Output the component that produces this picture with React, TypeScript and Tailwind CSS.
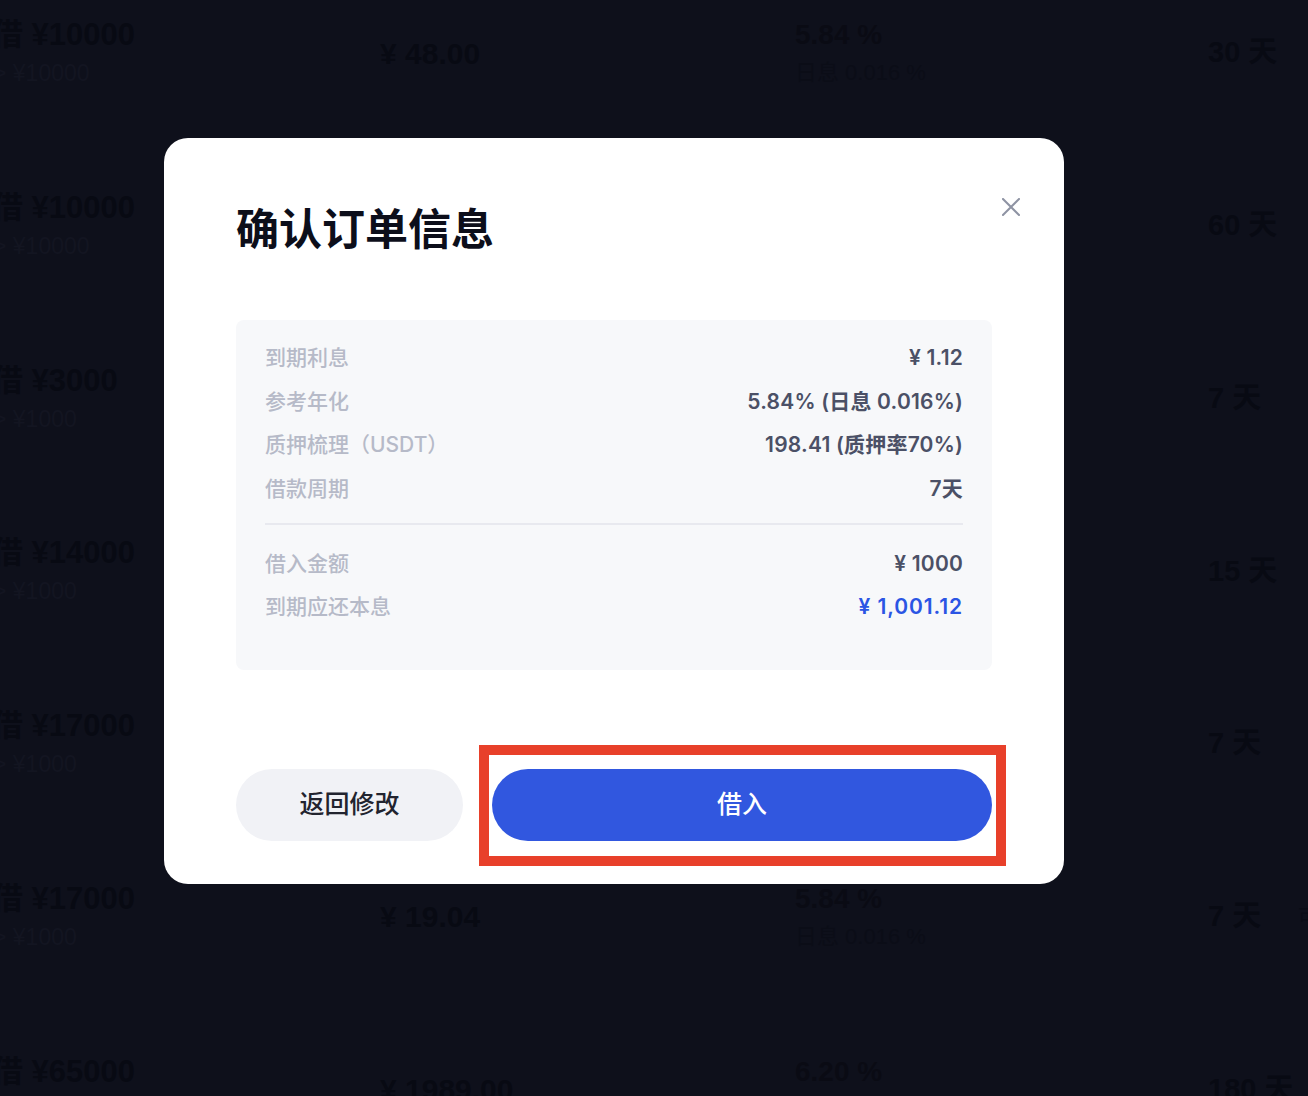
import type { ReactNode } from 'react';

type Row = {
  amount: string;
  min: string;
  fee?: string;
  rate?: string;
  daily?: string;
  days: string;
  extra?: string;
};

// rows 2-5 sit under the dialog in the middle columns
const rows: Row[] = [
  { amount: '借 ¥10000', min: '> ¥10000', fee: '¥ 48.00', rate: '5.84 %', daily: '日息 0.016 %', days: '30 天' },
  { amount: '借 ¥10000', min: '> ¥10000', days: '60 天' },
  { amount: '借 ¥3000', min: '> ¥1000', days: '7 天' },
  { amount: '借 ¥14000', min: '> ¥1000', days: '15 天' },
  { amount: '借 ¥17000', min: '> ¥1000', days: '7 天' },
  { amount: '借 ¥17000', min: '> ¥1000', fee: '¥ 19.04', rate: '5.84 %', daily: '日息 0.016 %', days: '7 天', extra: '可' },
  { amount: '借 ¥65000', min: '> ¥1000', fee: '¥ 1989.00', rate: '6.20 %', daily: '日息 0.017 %', days: '180 天' }
];

const details = [
  { label: '到期利息', value: '¥ 1.12' },
  { label: '参考年化', value: '5.84% (日息 0.016%)' },
  { label: '质押梳理（USDT）', value: '198.41 (质押率70%)' },
  { label: '借款周期', value: '7天' }
];

function DetailRow({ label, children }: { label: string; children: ReactNode }) {
  return (
    <div className="flex h-[30px] items-center justify-between">
      <span className="text-[21px] font-medium text-[#b6bac8]">{label}</span>
      {children}
    </div>
  );
}

export default function App() {
  return (
    <div
      className="relative h-[1096px] w-[1308px] overflow-hidden bg-[#0e101b]"
      style={{ fontFamily: '"Liberation Sans", "Noto Sans CJK SC", sans-serif' }}
    >
      {/* list behind the dialog */}
      <div className="flex flex-col">
        {rows.map((row, i) => (
          <div key={i} className="flex h-[172.8px] shrink-0 items-start pt-[17px]">
            <div className="ml-[-8px] flex w-[388px] shrink-0 flex-col">
              <span className="text-[31px] font-bold leading-[36px] text-[#080a13]">{row.amount}</span>
              <span className="ml-[1px] mt-[5px] text-[23px] leading-[30px] text-[#131521]">{row.min}</span>
            </div>
            <div className="flex h-[72px] w-[415px] shrink-0 items-center">
              {row.fee && <span className="text-[30px] font-bold text-[#080a13]">{row.fee}</span>}
            </div>
            <div className="flex w-[413px] shrink-0 flex-col">
              {row.rate && <span className="text-[28px] font-bold leading-[36px] text-[#0a0b14]">{row.rate}</span>}
              {row.daily && <span className="mt-[5px] text-[22px] leading-[30px] text-[#0b0d17]">{row.daily}</span>}
            </div>
            <div className="flex h-[72px] w-[90px] shrink-0 items-center">
              <span className="text-[29px] font-bold text-[#080a13]">{row.days}</span>
            </div>
            {row.extra && (
              <div className="flex h-[72px] shrink-0 items-center">
                <span className="text-[20px] text-[#0a0c16]">{row.extra}</span>
              </div>
            )}
          </div>
        ))}
      </div>

      {/* confirm dialog */}
      <div
        className="absolute left-[164px] top-[138px] flex h-[746px] w-[900px] flex-col rounded-[24px] bg-white px-[72px]"
        style={{ fontFamily: 'Inter, "Noto Sans CJK SC", sans-serif' }}
      >
        <div className="flex items-start justify-between pt-[66px]">
          <h1 className="text-[43px] font-bold leading-[50px] text-[#0c0e1a]">确认订单信息</h1>
          <button type="button" className="mr-[-33px] mt-[-11px] grid h-[28px] w-[28px] place-items-center text-[#8e93a3]">
            <svg width="18" height="18" viewBox="0 0 18 18" fill="none" stroke="currentColor" strokeWidth="2" strokeLinecap="square">
              <path d="M1 1L17 17M17 1L1 17" />
            </svg>
          </button>
        </div>

        <div className="mt-[66px] flex flex-col rounded-[8px] bg-[#f7f8fa] px-[29px] pb-[48px] pt-[23px]">
          <div className="flex flex-col gap-[13.5px]">
            {details.map((d) => (
              <DetailRow key={d.label} label={d.label}>
                <span className="text-[21px] font-semibold tracking-[0.2px] text-[#4b5066]">{d.value}</span>
              </DetailRow>
            ))}
          </div>
          <div className="mb-[24px] mt-[19px] h-[2px] bg-[#e8e9ef]" />
          <div className="flex flex-col gap-[13px]">
            <DetailRow label="借入金额">
              <span className="text-[21px] font-semibold tracking-[0.2px] text-[#4b5066]">¥ 1000</span>
            </DetailRow>
            <DetailRow label="到期应还本息">
              <span className="text-[21px] font-semibold tracking-[0.9px] text-[#2b55e4]">¥ 1,001.12</span>
            </DetailRow>
          </div>
        </div>

        <div className="mb-[43px] mt-auto flex gap-[29px]">
          <button
            type="button"
            className="h-[72px] w-[227px] rounded-full bg-[#f1f2f6] text-[25px] font-medium text-[#22242f]"
          >
            返回修改
          </button>
          <button type="button" className="h-[72px] flex-1 rounded-full bg-[#3157df] text-[25px] font-medium text-white">
            借入
          </button>
        </div>
      </div>

      {/* highlight annotation */}
      <div className="pointer-events-none absolute left-[479px] top-[745px] h-[121px] w-[527px] border-[10px] border-[#e8402a]" />
    </div>
  );
}
